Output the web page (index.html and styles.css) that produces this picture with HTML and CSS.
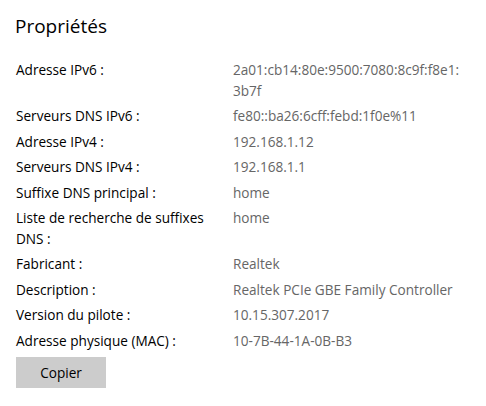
FILE: index.html
```html
<!DOCTYPE html>
<html lang="fr">
<head>
<meta charset="utf-8">
<title>Propriétés</title>
<link rel="stylesheet" href="styles.css">
</head>
<body>
<main class="panel">
  <h1 class="title">Propriétés</h1>
  <dl class="props">
    <dt>Adresse IPv6 :</dt><dd>2a01:cb14:80e:9500:7080:8c9f:f8e1:<wbr>3b7f</dd>
    <dt>Serveurs DNS IPv6 :</dt><dd>fe80::ba26:6cff:febd:1f0e%11</dd>
    <dt>Adresse IPv4 :</dt><dd>192.168.1.12</dd>
    <dt>Serveurs DNS IPv4 :</dt><dd>192.168.1.1</dd>
    <dt>Suffixe DNS principal :</dt><dd>home</dd>
    <dt>Liste de recherche de suffixes DNS :</dt><dd>home</dd>
    <dt>Fabricant :</dt><dd>Realtek</dd>
    <dt>Description :</dt><dd>Realtek PCIe GBE Family Controller</dd>
    <dt>Version du pilote :</dt><dd>10.15.307.2017</dd>
    <dt>Adresse physique (MAC) :</dt><dd>10-7B-44-1A-0B-B3</dd>
  </dl>
  <button class="copy" type="button">Copier</button>
</main>
</body>
</html>
```
FILE: styles.css
```css
html, body {
  margin: 0;
  padding: 0;
  background: #ffffff;
}

body {
  font-family: "Open Sans", "Noto Sans", "Liberation Sans", sans-serif;
  color: #000000;
}

.panel {
  padding: 12px 14px 0 16px;
  display: flex;
  flex-direction: column;
  align-items: flex-start;
}

.title {
  margin: 0 0 0 -1px;
  font-size: 19px;
  font-weight: 400;
  line-height: 28px;
}

.props {
  margin: 20px 0 0 0;
  width: 100%;
  display: grid;
  grid-template-columns: 213px 1fr;
  column-gap: 4px;
  row-gap: 5px;
  font-size: 13.6px;
  line-height: 20.5px;
}

.props dt {
  margin: 0;
}

.props dd {
  margin: 0;
  color: #666666;
}

.copy {
  margin-top: 6px;
  width: 90px;
  height: 31px;
  border: none;
  border-radius: 0;
  background: #cccccc;
  color: #000000;
  font-family: inherit;
  font-size: 13.6px;
  padding: 0;
}
```
